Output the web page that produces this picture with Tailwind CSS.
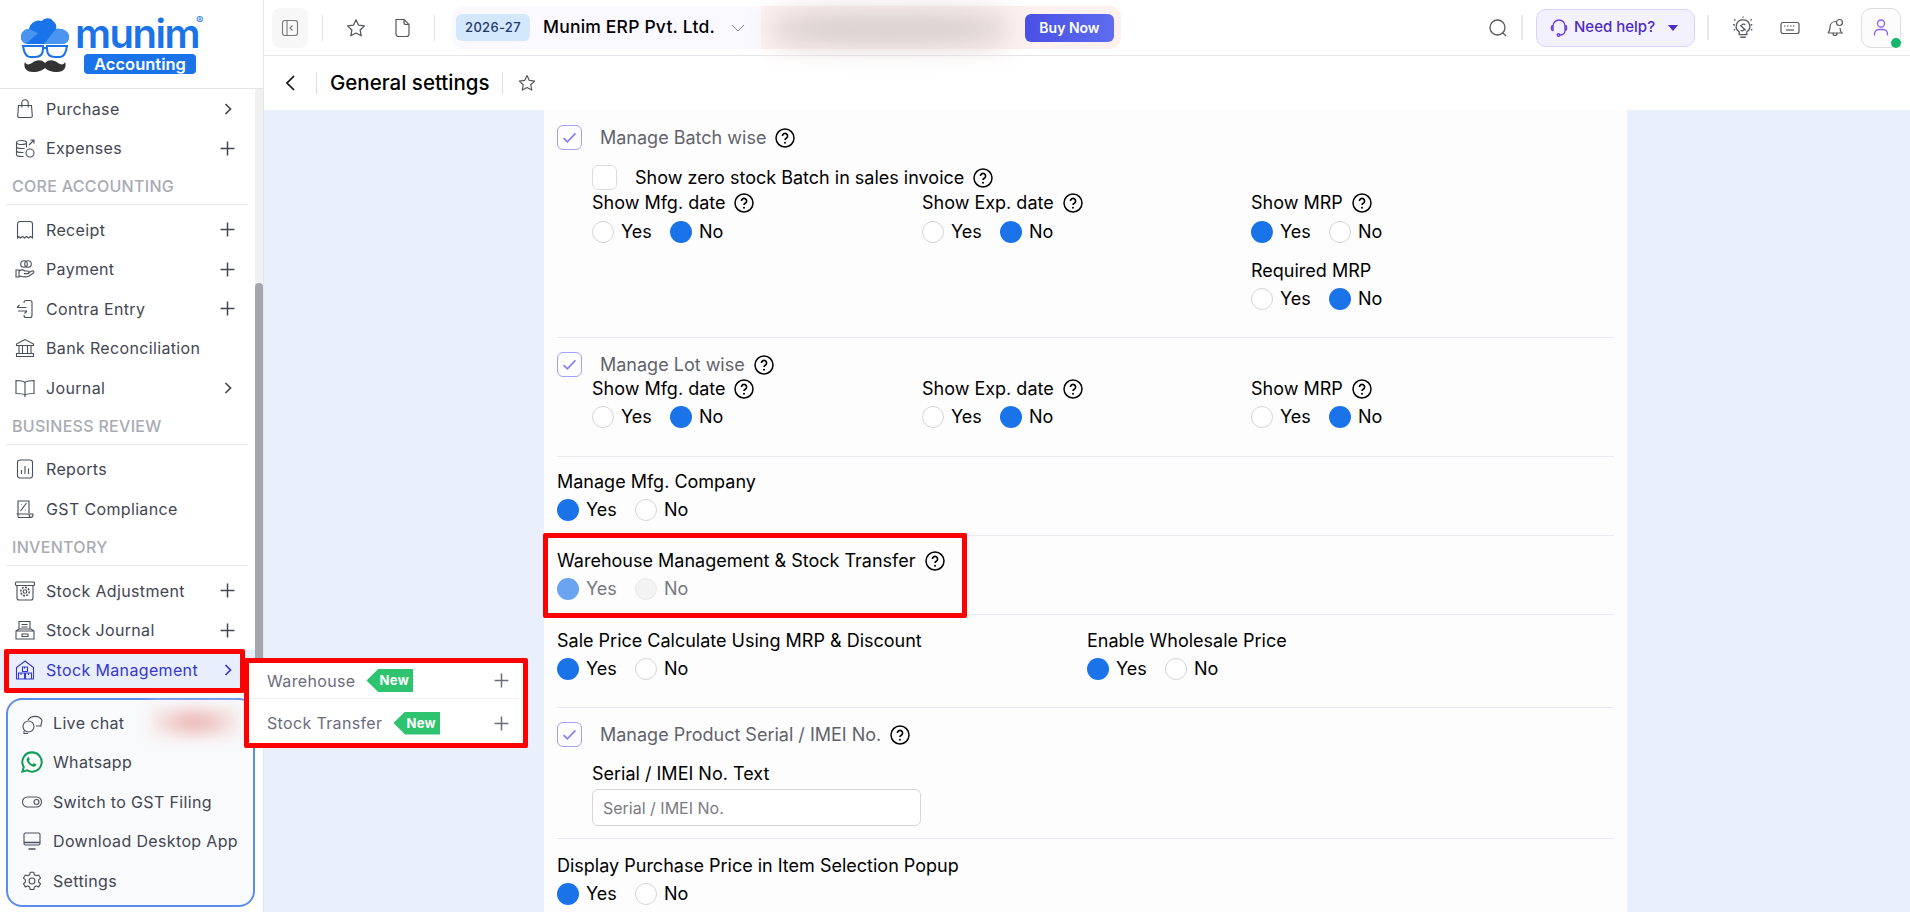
<!DOCTYPE html>
<html lang="en">
<head>
    <meta charset="UTF-8">
    <meta name="viewport" content="width=device-width, initial-scale=1.0">
    <title>General settings</title>
    <script src="https://cdn.jsdelivr.net/npm/@tailwindcss/browser@4"></script>
</head>
<body class="h-screen overflow-hidden bg-white font-[Inter,sans-serif] text-black">
    <!-- shared icons -->
    <svg class="hidden">
        <symbol id="plus" viewBox="0 0 16 16"><path d="M8 1.5v13M1.5 8h13" fill="none" stroke="currentColor" stroke-width="1.4"/></symbol>
        <symbol id="chev" viewBox="0 0 10 14"><path d="M2.5 2l5 5-5 5" fill="none" stroke="currentColor" stroke-width="1.7"/></symbol>
        <symbol id="help" viewBox="0 0 20 20"><circle cx="10" cy="10" r="9" fill="none" stroke="currentColor" stroke-width="1.5"/><path d="M7.4 7.9a2.6 2.6 0 1 1 3.9 2.3c-.9.5-1.3.9-1.3 1.9" fill="none" stroke="currentColor" stroke-width="1.6"/><circle cx="10" cy="14.8" r="1" fill="currentColor"/></symbol>
        <symbol id="star" viewBox="0 0 24 24"><path d="M12 3l2.8 5.9 6.4.8-4.7 4.4 1.2 6.4-5.7-3.1-5.7 3.1 1.2-6.4-4.7-4.4 6.4-.8z" fill="none" stroke="currentColor" stroke-width="1.4" stroke-linejoin="round"/></symbol>
        <symbol id="check" viewBox="0 0 16 16"><path d="M3 8.5l3.2 3.2L13 4.5" fill="none" stroke="currentColor" stroke-width="1.4"/></symbol>
    </svg>

    <div class="flex h-full">
        <!-- sidebar -->
        <aside class="w-[263px] shrink-0 flex flex-col relative bg-white">
            <div class="h-[89px] shrink-0 border-b border-[#e4e4e6] relative">
                <svg class="absolute left-[19px] top-[14px] w-[52px] h-[62px]" viewBox="0 0 52 62">
                    <path d="M2 23c0-5 4-8 8-8 1-6 7-10 13-8 2-3 8-4 11 0 3 2 4 5 3 8 6-1 13 2 13 8 0 4-3 7-7 7H9c-4 0-7-3-7-7z" fill="#1a73e8"/>
                    <path d="M2 23c0-5 4-8 8-8l9 4-12 11c-3-1-5-4-5-7z" fill="#4b94f0"/>
                    <path d="M37 15c6-1 13 2 13 8 0 4-3 7-7 7H25z" fill="#4b94f0"/>
                    <path d="M4 32h20v3c0 5-3 8-8 8H11c-4 0-6-4-7-11zM28 32h20c-1 7-3 11-7 11h-5c-5 0-8-3-8-8z" fill="none" stroke="#1a73e8" stroke-width="2"/>
                    <path d="M24 34h4" stroke="#1a73e8" stroke-width="2"/>
                    <path d="M26 49c4-4 9-3 13 0 3 2 6 2 7-1 2 5-1 10-8 10-6 0-10-2-12-4-2 2-6 4-12 4-7 0-10-5-8-10 1 3 4 3 7 1 4-3 9-4 13 0z" fill="#333"/>
                </svg>
                <span class="absolute left-[75px] top-[14px] text-[40px] leading-[40px] font-semibold tracking-[-1.5px] text-[#1a73e8]">munim</span>
                <span class="absolute left-[196px] top-[13px] text-[11px] leading-[14px] text-[#1a73e8]">®</span>
                <span class="absolute left-[84px] top-[54px] w-[112px] h-[20px] rounded-[4px] bg-[#1a73e8] text-white text-[16.5px] leading-[20px] font-semibold text-center">Accounting</span>
            </div>

            <div class="h-[607px] shrink-0 flex overflow-hidden">
                <nav class="w-[255px] shrink-0 text-[16px] tracking-[0.35px] text-[#434652]">
                    <a class="h-[39.5px] flex items-center pl-[15px] pr-[21px]">
                        <svg class="w-[20px] h-[20px] mr-[11px] text-[#4a4f5c]" viewBox="0 0 20 20" fill="none" stroke="currentColor" stroke-width="1.1"><path d="M3.5 6.5h13l.8 10.5a1.5 1.5 0 0 1-1.5 1.5H4.2A1.5 1.5 0 0 1 2.7 17zM6.8 8.5V4a3.2 3.2 0 0 1 6.4 0v4.5"/></svg>
                        <span class="flex-1">Purchase</span>
                        <svg class="w-[10px] h-[14px] mr-[1px]"><use href="#chev"/></svg>
                    </a>
                    <a class="h-[39.5px] flex items-center pl-[15px] pr-[21px]">
                        <svg class="w-[20px] h-[20px] mr-[11px] text-[#4a4f5c]" viewBox="0 0 20 20" fill="none" stroke="currentColor" stroke-width="1.1"><ellipse cx="6.5" cy="4.5" rx="5" ry="2"/><path d="M1.5 4.5v12c0 1.2 2 2 5 2h2M1.5 8.5c0 1.2 2 2 5 2h3M1.5 12.5c0 1.2 2 2 5 2h2M11.5 4.5v5"/><circle cx="15" cy="15" r="4"/><path d="M14 7l5-5M15.5 2H19v3.5"/></svg>
                        <span class="flex-1">Expenses</span>
                        <svg class="w-[17px] h-[17px] -mr-[2px]"><use href="#plus"/></svg>
                    </a>

                    <div class="h-[42px] ml-[6px] relative">
                        <span class="absolute left-[6px] top-[9px] text-[16px] leading-[18px] tracking-[0.3px] font-medium text-[#a8abb3]">CORE ACCOUNTING</span>
                        <div class="absolute left-0 w-[242px] top-[36px] border-t border-[#e6e6e8]"></div>
                    </div>

                    <a class="h-[39.5px] flex items-center pl-[15px] pr-[21px]">
                        <svg class="w-[20px] h-[20px] mr-[11px] text-[#4a4f5c]" viewBox="0 0 20 20" fill="none" stroke="currentColor" stroke-width="1.1"><path d="M2.5 18V4A2.5 2.5 0 0 1 5 1.5h10A2.5 2.5 0 0 1 17.5 4v14l-2-1.5-2 1.5-2-1.5-2 1.5-2-1.5-2 1.5-1.5-1.5z"/></svg>
                        <span class="flex-1">Receipt</span>
                        <svg class="w-[17px] h-[17px] -mr-[2px]"><use href="#plus"/></svg>
                    </a>
                    <a class="h-[39.5px] flex items-center pl-[15px] pr-[21px]">
                        <svg class="w-[20px] h-[20px] mr-[11px] text-[#4a4f5c]" viewBox="0 0 20 20" fill="none" stroke="currentColor" stroke-width="1.1"><circle cx="9" cy="5" r="3.3"/><circle cx="13" cy="5" r="3.3"/><path d="M1 11h3v7H1zM4 12c2-1.5 4-1.5 6 0h3a1.3 1.3 0 0 1 0 2.6H9M13 14l4-2c1.5-.5 2.5 1 1.5 2l-4.5 3c-2 1-5 1-7 .5L4 17"/></svg>
                        <span class="flex-1">Payment</span>
                        <svg class="w-[17px] h-[17px] -mr-[2px]"><use href="#plus"/></svg>
                    </a>
                    <a class="h-[39.5px] flex items-center pl-[15px] pr-[21px]">
                        <svg class="w-[20px] h-[20px] mr-[11px] text-[#4a4f5c]" viewBox="0 0 20 20" fill="none" stroke="currentColor" stroke-width="1.1"><path d="M9 4v-.5a2 2 0 0 1 2-2h4a2 2 0 0 1 2 2v13a2 2 0 0 1-2 2h-4a2 2 0 0 1-2-2V16M2 8.5h9.5M4.5 6L2 8.5M3 12h9M9.5 14.5L12 12"/></svg>
                        <span class="flex-1">Contra Entry</span>
                        <svg class="w-[17px] h-[17px] -mr-[2px]"><use href="#plus"/></svg>
                    </a>
                    <a class="h-[39.5px] flex items-center pl-[15px] pr-[21px]">
                        <svg class="w-[20px] h-[20px] mr-[11px] text-[#4a4f5c]" viewBox="0 0 20 20" fill="none" stroke="currentColor" stroke-width="1.1"><path d="M10 1.5L1.5 6v1.5h17V6zM4 7.5v8M7.5 7.5v8M12.5 7.5v8M16 7.5v8M2.5 15.5h15M1.5 18.5v-3h17v3z"/></svg>
                        <span class="flex-1">Bank Reconciliation</span>
                    </a>
                    <a class="h-[39.5px] flex items-center pl-[15px] pr-[21px]">
                        <svg class="w-[20px] h-[20px] mr-[11px] text-[#4a4f5c]" viewBox="0 0 20 20" fill="none" stroke="currentColor" stroke-width="1.1"><path d="M10 4.5C8 2.5 5 2.5 1 2.5v13c4 0 7 0 9 1.5 2-1.5 5-1.5 9-1.5v-13c-4 0-7 0-9 2zM10 4.5V19"/></svg>
                        <span class="flex-1">Journal</span>
                        <svg class="w-[10px] h-[14px] mr-[1px]"><use href="#chev"/></svg>
                    </a>

                    <div class="h-[42px] ml-[6px] relative">
                        <span class="absolute left-[6px] top-[9px] text-[16px] leading-[18px] tracking-[0.3px] font-medium text-[#a8abb3]">BUSINESS REVIEW</span>
                        <div class="absolute left-0 w-[242px] top-[36px] border-t border-[#e6e6e8]"></div>
                    </div>

                    <a class="h-[39.5px] flex items-center pl-[15px] pr-[21px]">
                        <svg class="w-[20px] h-[20px] mr-[11px] text-[#4a4f5c]" viewBox="0 0 20 20" fill="none" stroke="currentColor" stroke-width="1.1"><rect x="2.5" y="1" width="15" height="18" rx="2.5"/><path d="M6.5 11v4M10 7v8M13.5 9.5V15"/></svg>
                        <span class="flex-1">Reports</span>
                    </a>
                    <a class="h-[39.5px] flex items-center pl-[15px] pr-[21px]">
                        <svg class="w-[20px] h-[20px] mr-[11px] text-[#4a4f5c]" viewBox="0 0 20 20" fill="none" stroke="currentColor" stroke-width="1.1"><path d="M3 18V2h11v12M1.5 15H14c0 2 1 3.5 2 3.5H3M16 18.5c1 0 2-1 2-3.5h-4M5.5 12l6-8M6 5.5h.5M10.5 11h.5"/></svg>
                        <span class="flex-1">GST Compliance</span>
                    </a>

                    <div class="h-[42.5px] ml-[6px] relative">
                        <span class="absolute left-[6px] top-[9px] text-[16px] leading-[18px] tracking-[0.3px] font-medium text-[#a8abb3]">INVENTORY</span>
                        <div class="absolute left-0 w-[242px] top-[36px] border-t border-[#e6e6e8]"></div>
                    </div>

                    <a class="h-[39.5px] flex items-center pl-[15px] pr-[21px]">
                        <svg class="w-[20px] h-[20px] mr-[11px] text-[#4a4f5c]" viewBox="0 0 20 20" fill="none" stroke="currentColor" stroke-width="1.1"><rect x="0.5" y="1" width="19" height="3.5" rx="1"/><path d="M2 4.5V17a2 2 0 0 0 2 2h12a2 2 0 0 0 2-2V4.5"/><circle cx="10" cy="10.5" r="1.8"/><circle cx="10" cy="10.5" r="4.2" stroke-dasharray="2 1.2" stroke-width="1.5"/></svg>
                        <span class="flex-1">Stock Adjustment</span>
                        <svg class="w-[17px] h-[17px] -mr-[2px]"><use href="#plus"/></svg>
                    </a>
                    <a class="h-[39.5px] flex items-center pl-[15px] pr-[21px]">
                        <svg class="w-[20px] h-[20px] mr-[11px] text-[#4a4f5c]" viewBox="0 0 20 20" fill="none" stroke="currentColor" stroke-width="1.1"><path d="M4 9V1.5h11V9M6.5 4.5h6M6.5 7h6M1 11l3-2h12l3 2v8H1zM1 11h18M7 14h6v2.5H7z"/></svg>
                        <span class="flex-1">Stock Journal</span>
                        <svg class="w-[17px] h-[17px] -mr-[2px]"><use href="#plus"/></svg>
                    </a>
                    <a class="h-[39.5px] flex items-center pl-[15px] pr-[21px] bg-[#e8eefc] text-[#3538cd]">
                        <svg class="w-[20px] h-[20px] mr-[11px]" viewBox="0 0 20 20" fill="none" stroke="currentColor" stroke-width="1.1"><path d="M1.5 19V7.5L10 1l8.5 6.5V19zM7.5 7h5v4.5h-5zM3.5 13h6v6h-6zM10.5 13h6v6h-6zM6 13v2M13.5 13v2M9.5 7v1.5"/></svg>
                        <span class="flex-1">Stock Management</span>
                        <svg class="w-[10px] h-[14px] mr-[1px]"><use href="#chev"/></svg>
                    </a>
                </nav>
                <div class="w-[8px] shrink-0 bg-[#f1f1f1]">
                    <div class="mt-[194px] h-[420px] rounded-t-full bg-[#a3a6ad]"></div>
                </div>
            </div>

            <div class="ml-[6px] w-[249px] h-[209px] mt-[2px] rounded-[16px] border-2 border-[#5b8def] bg-[#f9fafc] text-[16px] tracking-[0.35px] text-[#434652] pt-[3px] pl-[13px]">
                <a class="h-[39.5px] flex items-center relative">
                    <svg class="w-[22px] h-[22px] mr-[10px] text-[#4a4f5c]" viewBox="0 0 22 22" fill="none" stroke="currentColor" stroke-width="1.1"><path d="M7 8a8 7 0 0 1 14 0c0 2-.5 3-1 4.5V14h-5"/><circle cx="7.5" cy="14.5" r="5.5"/><path d="M3 19v2.5h4"/></svg>
                    <span>Live chat</span>
                    <div class="absolute left-[128px] top-[1px] w-[92px] h-[36px] blur-[6px] bg-[radial-gradient(ellipse_at_center,#eebcbc_15%,#f6eeee_70%)]"></div>
                </a>
                <a class="h-[39.5px] flex items-center">
                    <svg class="w-[22px] h-[22px] mr-[10px]" viewBox="0 0 24 24"><path d="M12 1.5A10.5 10.5 0 0 0 3 17.4L1.5 22.5l5.3-1.4A10.5 10.5 0 1 0 12 1.5z" fill="#fff" stroke="#0f9d58" stroke-width="2.2"/><path d="M8.3 6.5c-.4 0-1 .2-1.4.8-.6.8-1 2-.5 3.5.8 2.4 3.5 5.2 6.3 6.2 1.5.5 2.8 0 3.5-.8.5-.6.6-1.3.5-1.7l-2.4-1.2c-.3-.1-.5 0-.7.2l-.8 1c-1.7-.6-3.4-2.2-4.1-3.9l.7-.9c.2-.2.2-.4.1-.7l-1-2.3z" fill="#0f9d58"/></svg>
                    <span>Whatsapp</span>
                </a>
                <a class="h-[39.5px] flex items-center">
                    <svg class="w-[22px] h-[22px] mr-[10px] text-[#4a4f5c]" viewBox="0 0 22 22" fill="none" stroke="currentColor" stroke-width="1.1"><rect x="1.5" y="6" width="19" height="10" rx="5"/><circle cx="15.5" cy="11" r="2.5"/></svg>
                    <span>Switch to GST Filing</span>
                </a>
                <a class="h-[39.5px] flex items-center">
                    <svg class="w-[22px] h-[22px] mr-[10px] text-[#4a4f5c]" viewBox="0 0 22 22" fill="none" stroke="currentColor" stroke-width="1.1"><rect x="3" y="3" width="16" height="12" rx="1.5"/><path d="M3 12.5h16M7.5 19h7" stroke-width="1.6"/></svg>
                    <span>Download Desktop App</span>
                </a>
                <a class="h-[39.5px] flex items-center">
                    <svg class="w-[22px] h-[22px] mr-[10px] text-[#4a4f5c]" viewBox="0 0 24 24" fill="none" stroke="currentColor" stroke-width="1.2"><circle cx="12" cy="12" r="3.2"/><path d="M10 2.5h4l.6 2.8 2 1 2.7-.9 2 3.4-2.1 1.9v2.4l2.1 1.9-2 3.4-2.7-.9-2 1-.6 2.8h-4l-.6-2.8-2-1-2.7.9-2-3.4 2.1-1.9v-2.4L2.7 8.8l2-3.4 2.7.9 2-1z" stroke-linejoin="round"/></svg>
                    <span>Settings</span>
                </a>
            </div>

            <!-- red annotation + flyout -->
            <div class="absolute left-[4px] top-[649px] w-[241px] h-[44px] border-[5px] border-[#ff0000] rounded-[2px]"></div>
            <div class="absolute left-[244px] top-[658px] w-[284px] h-[90px] z-20 border-[5px] border-[#ff0000] rounded-[2px] bg-white text-[16px] tracking-[0.35px] text-[#6b6c7b]">
                <div class="h-[36px] flex items-center pl-[18px] pr-[13px] border-b border-[#f2f2f4]">
                    <span>Warehouse</span>
                    <span class="ml-[11px] w-[47px] h-[23px] pl-[13px] bg-[#2ec46f] text-white text-[13px] leading-[22px] font-bold [clip-path:polygon(25%_0,100%_0,100%_100%,25%_100%,0_50%)]">New</span>
                    <svg class="ml-auto w-[17px] h-[17px]"><use href="#plus"/></svg>
                </div>
                <div class="h-[44px] pt-[4px] flex items-center pl-[18px] pr-[13px]">
                    <span>Stock Transfer</span>
                    <span class="ml-[11px] w-[47px] h-[23px] pl-[13px] bg-[#2ec46f] text-white text-[13px] leading-[22px] font-bold [clip-path:polygon(25%_0,100%_0,100%_100%,25%_100%,0_50%)]">New</span>
                    <svg class="ml-auto w-[17px] h-[17px]"><use href="#plus"/></svg>
                </div>
            </div>
        </aside>

        <div class="flex-1 flex flex-col min-w-0 border-l border-[#e6e6e8]">
            <!-- top bar -->
            <header class="h-[56px] shrink-0 border-b border-[#e6e6e8] flex items-center text-[#55585f]">
                <div class="ml-[8px] w-[36px] h-[40px] rounded-lg bg-[#f7f7f7] flex items-center justify-center">
                    <svg class="w-[18px] h-[18px]" viewBox="0 0 18 18" fill="none" stroke="#777" stroke-width="1.1"><rect x="1.5" y="1.5" width="15" height="15" rx="2.5"/><path d="M6 1.5v15M11.5 6.5L9 9l2.5 2.5"/></svg>
                </div>
                <div class="ml-[14px] w-[1px] h-[26px] bg-[#e4e4e6]"></div>
                <svg class="ml-[22px] w-[22px] h-[22px]"><use href="#star"/></svg>
                <svg class="ml-[24px] w-[22px] h-[22px]" viewBox="0 0 22 22" fill="none" stroke="currentColor" stroke-width="1.2"><path d="M5 2.5h8l5 5V17a2.5 2.5 0 0 1-2.5 2.5h-8A2.5 2.5 0 0 1 5 17zM13 2.5v3a2 2 0 0 0 2 2h3"/></svg>
                <div class="ml-[21px] w-[1px] h-[26px] bg-[#e4e4e6]"></div>
                <div class="ml-[17px] w-[669px] h-[43px] rounded-[12px] bg-[#faf9ff] relative flex items-center pl-[4px]">
                    <span class="w-[74px] h-[27px] rounded-md bg-[#d3e8fd] text-[#1e3a6e] text-[13px] tracking-[0.3px] font-medium leading-[27px] text-center">2026-27</span>
                    <span class="ml-[13px] text-[17.5px] font-medium text-black tracking-[0.2px]">Munim ERP Pvt. Ltd.</span>
                    <svg class="ml-[16px] w-[14px] h-[10px]" viewBox="0 0 14 10" fill="none" stroke="#8a8d94" stroke-width="1"><path d="M1 2l6 6 6-6"/></svg>
                    <div class="absolute left-[309px] top-0 right-0 h-[43px] rounded-r-[12px] bg-[#fdf1f0]"></div>
                    <div class="absolute left-[320px] top-[4px] w-[235px] h-[38px] blur-md bg-[radial-gradient(ellipse_at_center,#d9d0ce_55%,#f4e6e4_90%)]"></div>
                    <span class="absolute left-[573px] top-[8px] w-[89px] h-[28px] rounded-md bg-gradient-to-r from-[#4a4fe5] to-[#5d6cf0] text-white text-[14px] font-semibold leading-[28px] text-center">Buy Now</span>
                </div>

                <svg class="ml-auto w-[20px] h-[20px]" viewBox="0 0 20 20" fill="none" stroke="currentColor" stroke-width="1.3"><circle cx="9.5" cy="9.5" r="7.5"/><path d="M15 15l3 3"/></svg>
                <div class="ml-[13px] w-[2px] h-[25px] bg-[#e8e8ea]"></div>
                <div class="ml-[13px] w-[159px] h-[38px] rounded-[10px] border border-[#d9d2fa] bg-[#f4f1fe] flex items-center pl-[13px] text-[#4c2bc0] text-[15px] font-medium">
                    <svg class="w-[18px] h-[20px] mr-[6px]" viewBox="0 0 18 20" fill="none" stroke="#6d3fe0" stroke-width="1.4"><path d="M3 10V8a6 6 0 0 1 12 0v2M3 7.5A1.5 1.5 0 0 0 1.5 9v2A1.5 1.5 0 0 0 3 12.5zM15 7.5A1.5 1.5 0 0 1 16.5 9v2a1.5 1.5 0 0 1-1.5 1.5zM15 12.5c0 3-2.5 4.5-5 4.5"/><circle cx="8.5" cy="17" r="1.2"/></svg>
                    <span>Need help?</span>
                    <span class="ml-[13px] w-0 h-0 border-x-[5px] border-x-transparent border-t-[6px] border-t-[#4c2bc0]"></span>
                </div>
                <div class="ml-[12px] w-[2px] h-[25px] bg-[#e8e8ea]"></div>
                <svg class="ml-[22px] w-[24px] h-[24px]" viewBox="0 0 22 22" fill="none" stroke="currentColor" stroke-width="1.2"><path d="M11 3.5a6 6 0 0 0-3.5 11V17h7v-2.5A6 6 0 0 0 11 3.5zM8.5 19.5h5M8.5 8.5l5 4.5M13 8c-1-1-3-.5-3 .8M9 13c1 1 3 .5 3-.8"/><path d="M2 8h2M18 8h2M3 3l1.5 1.5M19 3l-1.5 1.5M2.5 13l1.5-1M19.500 13L18 12M11 .5v1" stroke-dasharray="1.5 1"/></svg>
                <svg class="ml-[25px] w-[20px] h-[16px]" viewBox="0 0 20 14" fill="none" stroke="currentColor" stroke-width="1.2"><rect x="1" y="1.5" width="18" height="11" rx="2"/><path d="M4 5h12" stroke-dasharray="1.5 1.5"/><path d="M6 9h8"/></svg>
                <svg class="ml-[25px] w-[20px] h-[20px]" viewBox="0 0 20 20" fill="none" stroke="currentColor" stroke-width="1.2"><path d="M3 15h14c-1.5-1.5-2-3-2-5M11 3.5C7.5 3.5 5 6 5 9.5c0 2.5-.8 4-2 5.5M8 15.5a2 2 0 0 0 4 0"/><circle cx="14.5" cy="4.5" r="3"/></svg>
                <div class="ml-[16px] mr-[9px] w-[40px] h-[40px] rounded-[10px] border border-[#dedee0] bg-[#fcfcfd] relative flex items-center justify-center">
                    <svg class="w-[18px] h-[20px]" viewBox="0 0 18 20" fill="none" stroke="#8b5cf6" stroke-width="1.3"><circle cx="9" cy="5.5" r="3.5"/><path d="M2.5 17.5V16A4.500 4.500 0 0 1 7 11.5h4a4.500 4.500 0 0 1 4.500 4.500v1.500"/></svg>
                    <span class="absolute -right-[1px] -bottom-[1px] w-[10px] h-[10px] rounded-full bg-[#12b76a]"></span>
                </div>
            </header>

            <!-- title bar -->
            <div class="h-[54px] shrink-0 bg-white flex items-center">
                <svg class="ml-[20px] w-[12px] h-[20px]" viewBox="0 0 12 20" fill="none" stroke="#111" stroke-width="1.7"><path d="M10 3L3 10l7 7"/></svg>
                <div class="ml-[20px] w-[1px] h-[22px] bg-[#dedee0]"></div>
                <span class="ml-[13px] text-[20.5px] font-medium">General settings</span>
                <div class="ml-[12px] w-[1px] h-[22px] bg-[#dedee0]"></div>
                <svg class="ml-[14px] w-[20px] h-[20px] text-[#555]"><use href="#star"/></svg>
            </div>

            <!-- settings -->
            <main class="flex-1 min-h-0 overflow-hidden bg-[#e9effb] pl-[280px]">
                <div class="w-[1083px] h-full bg-[#fdfdfe] px-[13px] text-[18px] leading-[24px]">

                    <section class="h-[228px] pt-[15px] border-b border-[#e8e9f2]">
                        <div class="h-[25px] flex items-center text-[#62636a]">
                            <span class="w-[25px] h-[25px] rounded-md border border-[#a5a0f5] flex items-center justify-center text-[#8480f0]"><svg class="w-[19px] h-[19px]"><use href="#check"/></svg></span>
                            <span class="ml-[18px]">Manage Batch wise</span>
                            <svg class="ml-[9px] w-[20px] h-[20px] text-black"><use href="#help"/></svg>
                        </div>
                        <div class="pl-[35px]">
                            <div class="mt-[15px] h-[25px] flex items-center">
                                <span class="w-[25px] h-[25px] rounded-md border border-[#dcdcdf] bg-white"></span>
                                <span class="ml-[18px]">Show zero stock Batch in sales invoice</span>
                                <svg class="ml-[9px] w-[20px] h-[20px]"><use href="#help"/></svg>
                            </div>
                            <div class="grid grid-cols-[330px_329px_1fr]">
                                <div>
                                    <div class="mt-[1px] flex items-center">Show Mfg. date<svg class="ml-[9px] w-[20px] h-[20px]"><use href="#help"/></svg></div>
                                    <div class="mt-[5px] flex items-center">
                                        <span class="w-[22px] h-[22px] rounded-full border border-[#d5d5d8] bg-white mr-[7px]"></span><span class="w-[49px]">Yes</span>
                                        <span class="w-[22px] h-[22px] rounded-full bg-[#1a73e8] mr-[7px]"></span><span>No</span>
                                    </div>
                                </div>
                                <div>
                                    <div class="mt-[1px] flex items-center">Show Exp. date<svg class="ml-[9px] w-[20px] h-[20px]"><use href="#help"/></svg></div>
                                    <div class="mt-[5px] flex items-center">
                                        <span class="w-[22px] h-[22px] rounded-full border border-[#d5d5d8] bg-white mr-[7px]"></span><span class="w-[49px]">Yes</span>
                                        <span class="w-[22px] h-[22px] rounded-full bg-[#1a73e8] mr-[7px]"></span><span>No</span>
                                    </div>
                                </div>
                                <div>
                                    <div class="mt-[1px] flex items-center">Show MRP<svg class="ml-[9px] w-[20px] h-[20px]"><use href="#help"/></svg></div>
                                    <div class="mt-[5px] flex items-center">
                                        <span class="w-[22px] h-[22px] rounded-full bg-[#1a73e8] mr-[7px]"></span><span class="w-[49px]">Yes</span>
                                        <span class="w-[22px] h-[22px] rounded-full border border-[#d5d5d8] bg-white mr-[7px]"></span><span>No</span>
                                    </div>
                                    <div class="mt-[15px]">Required MRP</div>
                                    <div class="mt-[4px] flex items-center">
                                        <span class="w-[22px] h-[22px] rounded-full border border-[#d5d5d8] bg-white mr-[7px]"></span><span class="w-[49px]">Yes</span>
                                        <span class="w-[22px] h-[22px] rounded-full bg-[#1a73e8] mr-[7px]"></span><span>No</span>
                                    </div>
                                </div>
                            </div>
                        </div>
                    </section>

                    <section class="h-[119px] pt-[14px] border-b border-[#e8e9f2]">
                        <div class="h-[25px] flex items-center text-[#62636a]">
                            <span class="w-[25px] h-[25px] rounded-md border border-[#a5a0f5] flex items-center justify-center text-[#8480f0]"><svg class="w-[19px] h-[19px]"><use href="#check"/></svg></span>
                            <span class="ml-[18px]">Manage Lot wise</span>
                            <svg class="ml-[9px] w-[20px] h-[20px] text-black"><use href="#help"/></svg>
                        </div>
                        <div class="pl-[35px] grid grid-cols-[330px_329px_1fr]">
                            <div>
                                <div class="flex items-center">Show Mfg. date<svg class="ml-[9px] w-[20px] h-[20px]"><use href="#help"/></svg></div>
                                <div class="mt-[4px] flex items-center">
                                    <span class="w-[22px] h-[22px] rounded-full border border-[#d5d5d8] bg-white mr-[7px]"></span><span class="w-[49px]">Yes</span>
                                    <span class="w-[22px] h-[22px] rounded-full bg-[#1a73e8] mr-[7px]"></span><span>No</span>
                                </div>
                            </div>
                            <div>
                                <div class="flex items-center">Show Exp. date<svg class="ml-[9px] w-[20px] h-[20px]"><use href="#help"/></svg></div>
                                <div class="mt-[4px] flex items-center">
                                    <span class="w-[22px] h-[22px] rounded-full border border-[#d5d5d8] bg-white mr-[7px]"></span><span class="w-[49px]">Yes</span>
                                    <span class="w-[22px] h-[22px] rounded-full bg-[#1a73e8] mr-[7px]"></span><span>No</span>
                                </div>
                            </div>
                            <div>
                                <div class="flex items-center">Show MRP<svg class="ml-[9px] w-[20px] h-[20px]"><use href="#help"/></svg></div>
                                <div class="mt-[4px] flex items-center">
                                    <span class="w-[22px] h-[22px] rounded-full border border-[#d5d5d8] bg-white mr-[7px]"></span><span class="w-[49px]">Yes</span>
                                    <span class="w-[22px] h-[22px] rounded-full bg-[#1a73e8] mr-[7px]"></span><span>No</span>
                                </div>
                            </div>
                        </div>
                    </section>

                    <section class="h-[79px] pt-[13px] border-b border-[#e8e9f2]">
                        <div>Manage Mfg. Company</div>
                        <div class="mt-[4px] flex items-center">
                            <span class="w-[22px] h-[22px] rounded-full bg-[#1a73e8] mr-[7px]"></span><span class="w-[49px]">Yes</span>
                            <span class="w-[22px] h-[22px] rounded-full border border-[#d5d5d8] bg-white mr-[7px]"></span><span>No</span>
                        </div>
                    </section>

                    <section class="h-[79px] pt-[13px] border-b border-[#e8e9f2] relative">
                        <div class="flex items-center">Warehouse Management &amp; Stock Transfer<svg class="ml-[9px] w-[20px] h-[20px]"><use href="#help"/></svg></div>
                        <div class="mt-[4px] flex items-center text-[#77787e]">
                            <span class="w-[22px] h-[22px] rounded-full bg-[#6aa3f0] mr-[7px]"></span><span class="w-[49px]">Yes</span>
                            <span class="w-[22px] h-[22px] rounded-full border border-[#e8e8ea] bg-[#f3f3f4] mr-[7px]"></span><span>No</span>
                        </div>
                        <div class="absolute -left-[14px] -top-[3px] w-[424px] h-[85px] border-[5px] border-[#ff0000] rounded-[2px]"></div>
                    </section>

                    <section class="h-[93px] pt-[14px] border-b border-[#e8e9f2] grid grid-cols-[530px_1fr]">
                        <div>
                            <div>Sale Price Calculate Using MRP &amp; Discount</div>
                            <div class="mt-[4px] flex items-center">
                                <span class="w-[22px] h-[22px] rounded-full bg-[#1a73e8] mr-[7px]"></span><span class="w-[49px]">Yes</span>
                                <span class="w-[22px] h-[22px] rounded-full border border-[#d5d5d8] bg-white mr-[7px]"></span><span>No</span>
                            </div>
                        </div>
                        <div>
                            <div>Enable Wholesale Price</div>
                            <div class="mt-[4px] flex items-center">
                                <span class="w-[22px] h-[22px] rounded-full bg-[#1a73e8] mr-[7px]"></span><span class="w-[49px]">Yes</span>
                                <span class="w-[22px] h-[22px] rounded-full border border-[#d5d5d8] bg-white mr-[7px]"></span><span>No</span>
                            </div>
                        </div>
                    </section>

                    <section class="h-[131px] pt-[14px] border-b border-[#e8e9f2]">
                        <div class="h-[25px] flex items-center text-[#62636a]">
                            <span class="w-[25px] h-[25px] rounded-md border border-[#a5a0f5] flex items-center justify-center text-[#8480f0]"><svg class="w-[19px] h-[19px]"><use href="#check"/></svg></span>
                            <span class="ml-[18px]">Manage Product Serial / IMEI No.</span>
                            <svg class="ml-[9px] w-[20px] h-[20px] text-black"><use href="#help"/></svg>
                        </div>
                        <div class="pl-[35px]">
                            <div class="mt-[15px]">Serial / IMEI No. Text</div>
                            <input class="mt-[3px] block w-[329px] h-[37px] px-[10px] rounded-md border border-[#d5d5d8] bg-white text-[16px] placeholder:text-[#7a7b82]" placeholder="Serial / IMEI No.">
                        </div>
                    </section>

                    <section class="pt-[15px]">
                        <div>Display Purchase Price in Item Selection Popup</div>
                        <div class="mt-[4px] flex items-center">
                            <span class="w-[22px] h-[22px] rounded-full bg-[#1a73e8] mr-[7px]"></span><span class="w-[49px]">Yes</span>
                            <span class="w-[22px] h-[22px] rounded-full border border-[#d5d5d8] bg-white mr-[7px]"></span><span>No</span>
                        </div>
                    </section>
                </div>
            </main>
        </div>
    </div>
</body>
</html>
